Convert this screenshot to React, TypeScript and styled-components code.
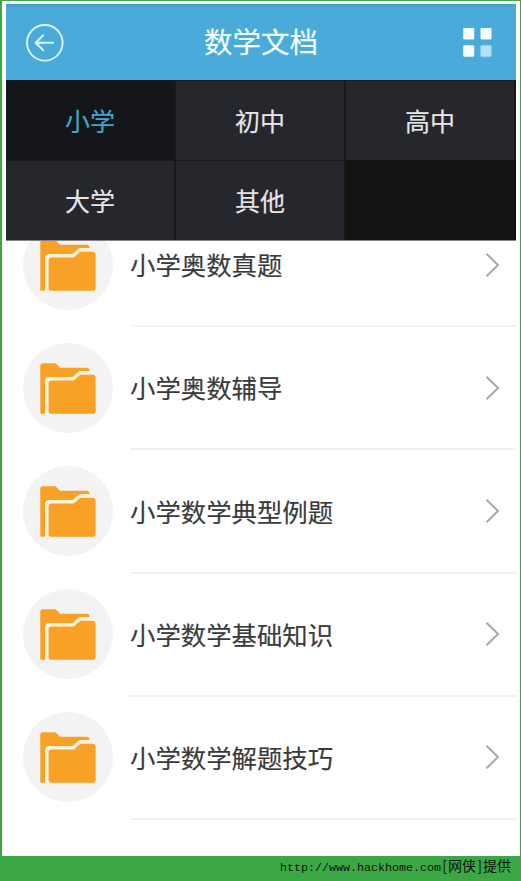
import React from "react";
import styled, { createGlobalStyle } from "styled-components";

const GlobalStyle = createGlobalStyle`
  * { box-sizing: border-box; }
  body { margin: 0; background: #fff; }
`;

const Frame = styled.div`
  width: 521px;
  height: 881px;
  display: flex;
  flex-direction: column;
  background: #fff;
  border: solid #3ca845;
  border-width: 1px 1px 0 2px;
  font-family: "Noto Sans CJK SC", sans-serif;
`;

const Screen = styled.main`
  flex: none;
  height: 855px;
  padding: 3px 4px 0;
  display: flex;
  flex-direction: column;
`;

const Header = styled.header`
  flex: none;
  height: 76px;
  padding: 0 24px 0 19px;
  display: grid;
  grid-template-columns: 40px 1fr 30px;
  align-items: center;
  background: linear-gradient(#4299c4 0, #49a8d6 3px, #4aabda 8px);
`;

const Title = styled.h1`
  margin: 0 5px 2px 0;
  text-align: center;
  font-size: 28.5px;
  line-height: 40px;
  font-weight: 400;
  color: #f4fdff;
  -webkit-text-stroke: 0.2px currentColor;
`;

const IconButton = styled.button`
  padding: 0;
  border: 0;
  background: none;
  display: flex;
  align-items: center;
`;

const Tabs = styled.nav`
  flex: none;
  height: 161px;
  display: grid;
  grid-template-columns: 170px 170px 170px;
  grid-template-rows: 80px 80px;
  background: #131312;
  border-bottom: 1px solid #858385;
`;

const Tab = styled.button<{ $active?: boolean }>`
  padding: 0 0 1px;
  border: solid #19191c;
  border-width: 1px 2px 0 0;
  font: 400 25px/36px "Noto Sans CJK SC", sans-serif;
  -webkit-text-stroke: 0.15px currentColor;
  color: ${(p) => (p.$active ? "#43a5cf" : "#e6e6e9")};
  background: ${(p) => (p.$active ? "#151619" : "#26262d")};
`;

const List = styled.ul`
  flex: 1;
  min-height: 0;
  margin: 0;
  padding: 0 0 36px;
  list-style: none;
  overflow: hidden;
  display: flex;
  flex-direction: column;
  justify-content: flex-end;
`;

const Row = styled.li`
  flex: none;
  height: 123.2px;
  padding-left: 17px;
  display: flex;
  align-items: center;
  gap: 17px;
`;

const FolderBadge = styled.span`
  flex: none;
  width: 90px;
  height: 90px;
  margin-bottom: 2px;
  border-radius: 50%;
  background: #f2f3f2;
`;

const RowBody = styled.div`
  flex: 1;
  align-self: stretch;
  padding: 0 16px 0 0;
  border-bottom: 2px solid #f2f2f2;
  display: flex;
  align-items: center;
  justify-content: space-between;
`;

const Label = styled.span`
  margin-bottom: 1px;
  font-size: 25.4px;
  line-height: 36px;
  color: #3a3a3a;
  -webkit-text-stroke: 0.15px currentColor;
`;

const Footer = styled.footer`
  flex: 1;
  margin: 0 -1px 0 -2px;
  padding-right: 10px;
  display: flex;
  justify-content: flex-end;
  align-items: baseline;
  background: #3ca845;
  color: #07140a;
  font-size: 14px;
  line-height: 19px;
`;

const Url = styled.span`
  font: 11.67px/19px "Liberation Mono", monospace;
`;

const Bracket = styled.span`
  display: inline-block;
  width: 7px;
  text-align: center;
`;

const BackIcon = () => (
  <svg width="40" height="40" viewBox="0 0 40 40" fill="none" stroke="#d5f5ff" strokeLinecap="round" strokeLinejoin="round">
    <circle cx="19.8" cy="20.8" r="17.8" strokeWidth="1.9" />
    <path d="M28.3 20.8H11M18.2 13.3L10.7 20.8l7.5 7.5" strokeWidth="2.1" />
  </svg>
);

const GridIcon = () => (
  <svg width="30" height="30" viewBox="0 0 30 30" fill="#f6feff">
    <rect x="1.2" y="1" width="11" height="11.5" rx="1.2" />
    <rect x="18.5" y="1" width="11" height="11.5" rx="1.2" />
    <rect x="1.2" y="18.3" width="11" height="11.5" rx="1.2" />
    <rect x="18.5" y="18.3" width="11" height="11.5" rx="1.2" fill="#b5def3" />
  </svg>
);

const FolderIcon = () => (
  <svg width="90" height="90" viewBox="0 0 90 90">
    <path
      d="M17.3 70V23q0-2.7 2.7-2.7h11.2q1.6 0 2.7 1.3l3 3.1h26.6q3 0 3 3V40H22V70q0 .8-.8.8h-3q-.9 0-.9-.8Z"
      fill="#f8a126"
    />
    <path
      d="M22 70.8V38.5q0-4.4 4.4-4.4h23.2l5.2-4.8q1.2-1.2 3-1.2h8.7q1.2 0 1.2 1.2V42H25.6v28.8Z"
      fill="#fff3d8"
    />
    <path
      d="M25.6 68.5V40.5q0-3 3-3h22.4l5.1-4.8q1-.9 2.5-.9h11.1q2.9 0 2.9 3v33.1q0 2.9-2.9 2.9H28.4q-2.8 0-2.8-2.3Z"
      fill="#f8a126"
    />
  </svg>
);

const Chevron = () => (
  <svg width="15" height="26" viewBox="0 0 15 26" fill="none" stroke="#a9a9a9" strokeWidth="2">
    <path d="M1.5 1.8L13 13L1.5 24.2" />
  </svg>
);

const tabs = ["小学", "初中", "高中", "大学", "其他"];
const folders = ["小学奥数真题", "小学奥数辅导", "小学数学典型例题", "小学数学基础知识", "小学数学解题技巧"];

export default function App() {
  return (
    <>
      <GlobalStyle />
      <Frame>
        <Screen>
          <Header>
            <IconButton aria-label="返回"><BackIcon /></IconButton>
            <Title>数学文档</Title>
            <IconButton aria-label="菜单"><GridIcon /></IconButton>
          </Header>
          <Tabs>
            {tabs.map((name, i) => <Tab key={name} $active={i === 0}>{name}</Tab>)}
          </Tabs>
          <List>
            {folders.map((name) => (
              <Row key={name}>
                <FolderBadge><FolderIcon /></FolderBadge>
                <RowBody>
                  <Label>{name}</Label>
                  <Chevron />
                </RowBody>
              </Row>
            ))}
          </List>
        </Screen>
        <Footer>
          <Url>http://www.hackhome.com</Url>
          <span><Bracket>[</Bracket>网侠<Bracket>]</Bracket>提供</span>
        </Footer>
      </Frame>
    </>
  );
}
